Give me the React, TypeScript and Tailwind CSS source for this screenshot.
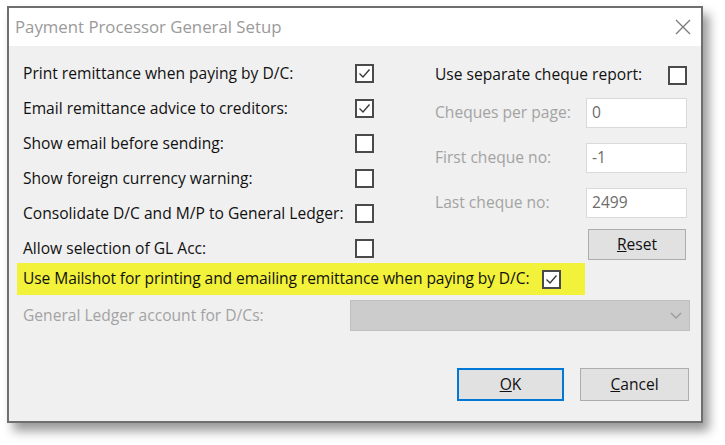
import React from "react";

const font = { fontFamily: '"Open Sans", "Noto Sans", sans-serif' };

function Check({ checked, className = "" }: { checked?: boolean; className?: string }) {
  return (
    <div className={`w-[19px] h-[19px] border-2 border-[#4a4a4a] bg-white flex items-center justify-center shrink-0 ${className}`}>
      {checked && (
        <svg width="13" height="11" viewBox="0 0 13 11">
          <path d="M1.5 5.5 L5 9 L11.5 1.5" fill="none" stroke="#3a3a3a" strokeWidth="1.4" />
        </svg>
      )}
    </div>
  );
}

function Row({ label, checked }: { label: string; checked?: boolean }) {
  return (
    <div className="h-[35px] flex items-center justify-between w-[351px]">
      <span className="text-[#111]">{label}</span>
      <Check checked={checked} />
    </div>
  );
}

function Field({ label, value }: { label: string; value: string }) {
  return (
    <div className="h-[30px] flex items-center justify-between">
      <span className="text-[#a3a3a3]">{label}</span>
      <div className="w-[101px] h-[30px] bg-white border border-[#d9d9d9] flex items-center pl-[5px] text-[#6d6d6d]">
        {value}
      </div>
    </div>
  );
}

export default function App() {
  return (
    <div className="w-[725px] h-[445px] bg-white pt-[6px] pl-[7px] text-[15.6px]" style={font}>
      <div className="w-[696px] h-[417px] border-2 border-[#6f6f6f] bg-[#f0f0f0] shadow-[6px_8px_10px_rgba(0,0,0,0.4)] flex flex-col">
        <div className="h-[38px] bg-white flex items-center justify-between pl-[6px] pr-[10px] shrink-0">
          <span className="text-[16.8px] text-[#9a9a9a]">Payment Processor General Setup</span>
          <svg width="16" height="16" viewBox="0 0 16 16">
            <path d="M1 1 L15 15 M15 1 L1 15" stroke="#7a7a7a" strokeWidth="1.3" fill="none" />
          </svg>
        </div>
        <div className="flex-1 flex flex-col pl-[14px] pt-[10px]">
          <div className="flex">
            <div className="flex flex-col">
              <Row label="Print remittance when paying by D/C:" checked />
              <Row label="Email remittance advice to creditors:" checked />
              <Row label="Show email before sending:" />
              <Row label="Show foreign currency warning:" />
              <Row label="Consolidate D/C and M/P to General Ledger:" />
              <Row label="Allow selection of GL Acc:" />
            </div>
            <div className="flex flex-col ml-[61px] w-[252px]">
              <div className="h-[38px] flex items-center justify-between">
                <span className="text-[#111]">Use separate cheque report:</span>
                <Check />
              </div>
              <div className="flex flex-col gap-[15px] mt-[4px]">
                <Field label="Cheques per page:" value="0" />
                <Field label="First cheque no:" value="-1" />
                <Field label="Last cheque no:" value="2499" />
              </div>
              <div className="flex justify-end mt-[11px] pr-[1px]">
                <div className="w-[98px] h-[31px] bg-[#e1e1e1] border border-[#adadad] flex items-center justify-center text-[#111]">
                  <span><span className="underline">R</span>eset</span>
                </div>
              </div>
            </div>
          </div>
          <div className="-ml-[6px] pl-[6px] pr-[24px] mt-[-3px] h-[32px] w-[568px] bg-[#f2f23a] flex items-center justify-between">
            <span className="text-[#111] tracking-[-0.1px]">Use Mailshot for printing and emailing remittance when paying by D/C:</span>
            <Check checked />
          </div>
          <div className="flex items-center justify-between mt-[5px] pr-[11px]">
            <span className="text-[#a3a3a3]">General Ledger account for D/Cs:</span>
            <div className="w-[340px] h-[31px] bg-[#cccccc] border border-[#bfbfbf] flex items-center justify-end pr-[7px]">
              <svg width="12" height="7" viewBox="0 0 12 7">
                <path d="M1 1 L6 6 L11 1" stroke="#9a9a9a" strokeWidth="1.3" fill="none" />
              </svg>
            </div>
          </div>
          <div className="flex justify-end gap-[16px] mt-[37px] pr-[12px]">
            <div className="w-[107px] h-[33px] bg-[#e1e1e1] border-2 border-[#0078d7] flex items-center justify-center text-[#111]">
              <span><span className="underline">O</span>K</span>
            </div>
            <div className="w-[109px] h-[33px] bg-[#e1e1e1] border border-[#adadad] flex items-center justify-center text-[#111]">
              <span><span className="underline">C</span>ancel</span>
            </div>
          </div>
        </div>
      </div>
    </div>
  );
}
